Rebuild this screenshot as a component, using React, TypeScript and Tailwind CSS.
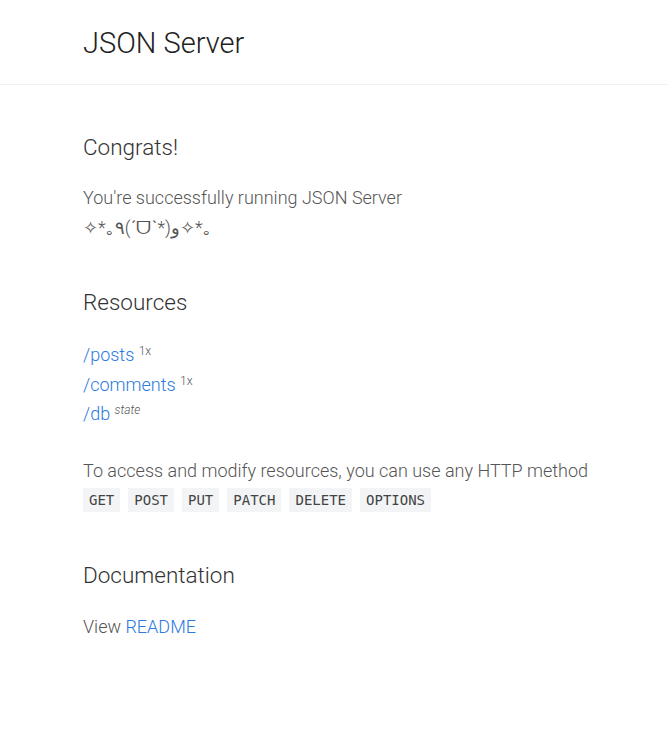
const METHODS = ["GET", "POST", "PUT", "PATCH", "DELETE", "OPTIONS"];

const RESOURCES = [
  { name: "posts", note: "1x", italic: false },
  { name: "comments", note: "1x", italic: false },
  { name: "db", note: "state", italic: true },
];

export default function App() {
  return (
    <div className="min-h-screen bg-white font-['Roboto',sans-serif] font-light text-[18px] text-[#555]">
      <header className="border-b border-[#f0f0f0]">
        <div className="pl-[83px] pr-6 pt-[18px] pb-[16px]">
          <h1 className="text-[29px] leading-[50px] text-[#222]">JSON Server</h1>
        </div>
      </header>

      <main className="pl-[83px] pr-6 pt-[44px]">
        <section>
          <h2 className="text-[22.5px] leading-[36px] text-[#333]">Congrats!</h2>
          <div className="mt-[18px] leading-[30px]">
            <div className="h-[30px]">You're successfully running JSON Server</div>
            <div className="h-[30px]">✧*｡٩(ˊᗜˋ*)و✧*｡</div>
          </div>
        </section>

        <section className="mt-[41px]">
          <h2 className="text-[22.5px] leading-[36px] text-[#333]">Resources</h2>
          <ul className="mt-[20px] leading-[29.5px]">
            {RESOURCES.map((r) => (
              <li key={r.name}>
                <a href="#" className="text-[#2a7ae2]">
                  /{r.name}
                </a>{" "}
                <sup className={r.italic ? "text-[12px] italic" : "text-[12px]"}>{r.note}</sup>
              </li>
            ))}
          </ul>

          <p className="mt-[27px] h-[30px] whitespace-nowrap leading-[30px]">
            To access and modify resources, you can use any HTTP method
          </p>
          <div className="mt-[2px] flex gap-2">
            {METHODS.map((m) => (
              <code
                key={m}
                className="bg-[#f3f4f6] px-[6px] font-['DejaVu_Sans_Mono',monospace] text-[14px] font-normal leading-[24px] text-[#444]"
              >
                {m}
              </code>
            ))}
          </div>
        </section>

        <section className="mt-[45px]">
          <h2 className="text-[22.5px] leading-[36px] text-[#333]">Documentation</h2>
          <p className="mt-[19px] h-[30px] leading-[30px]">
            View{" "}
            <a href="#" className="text-[#2a7ae2]">
              README
            </a>
          </p>
        </section>
      </main>
    </div>
  );
}
